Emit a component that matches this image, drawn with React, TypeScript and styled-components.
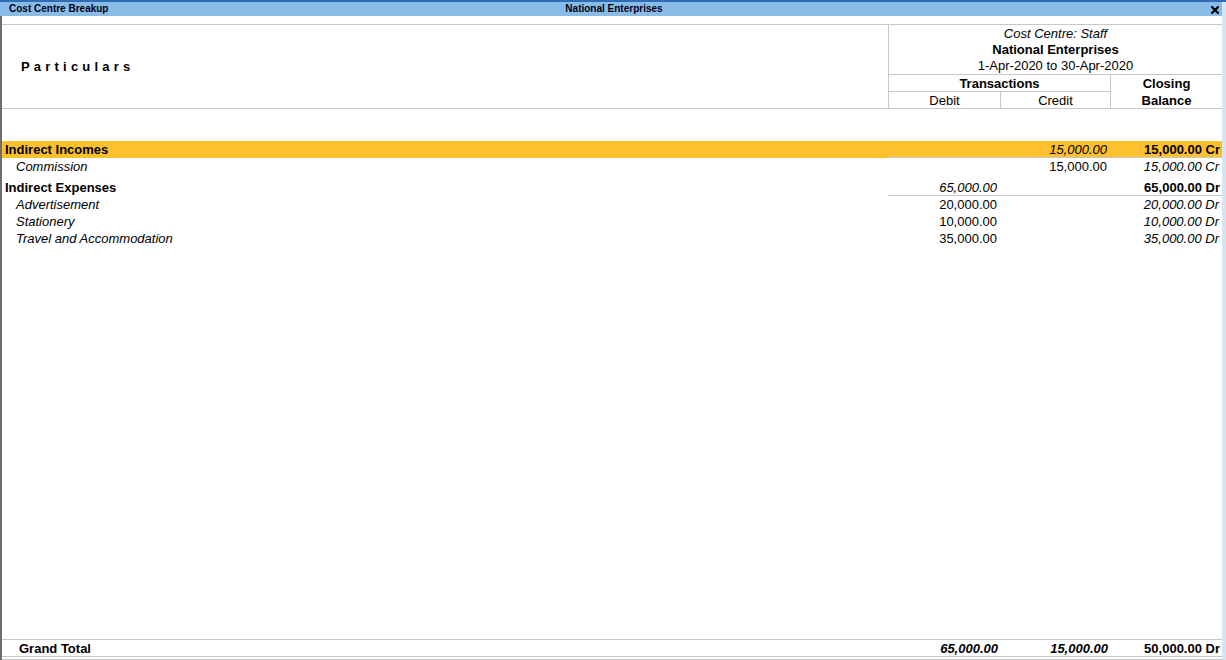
import React from 'react'
import styled, { createGlobalStyle } from 'styled-components'

const GlobalStyle = createGlobalStyle`
  html, body {
    margin: 0;
    padding: 0;
    background: #ffffff;
  }
  body {
    font-family: "Liberation Sans", Arial, sans-serif;
    color: #000000;
  }
`

const LINE = '#c8c8c8'

interface Amounts {
  debit?: string,
  credit?: string,
  closing?: string
}

interface Ledger extends Amounts {
  name: string
}

interface Group extends Ledger {
  highlight?: boolean,
  items: Ledger[]
}

const groups: Group[] = [
  {
    name: 'Indirect Incomes',
    highlight: true,
    credit: '15,000.00',
    closing: '15,000.00 Cr',
    items: [
      { name: 'Commission', credit: '15,000.00', closing: '15,000.00 Cr' }
    ]
  },
  {
    name: 'Indirect Expenses',
    debit: '65,000.00',
    closing: '65,000.00 Dr',
    items: [
      { name: 'Advertisement', debit: '20,000.00', closing: '20,000.00 Dr' },
      { name: 'Stationery', debit: '10,000.00', closing: '10,000.00 Dr' },
      { name: 'Travel and Accommodation', debit: '35,000.00', closing: '35,000.00 Dr' }
    ]
  }
]

const Window = styled.div`
  width: 1226px;
  height: 660px;
  display: flex;
  flex-direction: column;
  overflow: hidden;
`

const TopStripe = styled.div`
  height: 2px;
  background: #2f6cb5;
`

const Frame = styled.div`
  flex: 1;
  display: flex;
  min-height: 0;
`

const Main = styled.div`
  flex: 1;
  display: flex;
  flex-direction: column;
  min-width: 0;
`

const SideStrip = styled.div`
  width: 4px;
  background: #d7e5f2;
`

const TitleBar = styled.div`
  height: 14px;
  display: grid;
  grid-template-columns: 1fr auto 1fr;
  align-items: center;
  padding: 0 3px 0 9px;
  background: #88bce6;
  font-size: 10px;
  font-weight: bold;
  line-height: 14px;
  color: #000018;
`

const CloseBox = styled.div`
  justify-self: end;
  display: flex;
  align-items: center;
  padding-top: 1px;
`

const Report = styled.div`
  flex: 1;
  display: flex;
  flex-direction: column;
  border-left: 2px solid #6e6e6e;
  min-height: 0;
  font-size: 13px;
`

const Spacer = styled.div`
  height: 8px;
`

const Header = styled.div`
  display: grid;
  grid-template-columns: 1fr 334px;
  height: 83px;
  border-top: 1px solid ${LINE};
  border-bottom: 1px solid ${LINE};
`

const ParticularsHead = styled.div`
  display: flex;
  align-items: center;
  padding-left: 19px;
  font-weight: bold;
  letter-spacing: 4.2px;
`

const RightHead = styled.div`
  border-left: 1px solid ${LINE};
  display: flex;
  flex-direction: column;
`

const TitleBlock = styled.div`
  height: 48px;
  padding-top: 1px;
  border-bottom: 1px solid ${LINE};
  display: flex;
  flex-direction: column;
  align-items: center;
  line-height: 16px;
`

const HeadLine = styled.span<{ $italic?: boolean, $bold?: boolean }>`
  font-style: ${p => (p.$italic ? 'italic' : 'normal')};
  font-weight: ${p => (p.$bold ? 'bold' : 'normal')};
`

const ColumnGrid = styled.div`
  flex: 1;
  display: grid;
  grid-template-columns: 111px 110px 112px;
  grid-template-rows: 16px 17px;
`

const HeadCell = styled.div<{ $bold?: boolean, $span?: boolean, $tall?: boolean, $top?: boolean, $left?: boolean }>`
  display: flex;
  flex-direction: column;
  align-items: center;
  justify-content: center;
  line-height: 17px;
  font-weight: ${p => (p.$bold ? 'bold' : 'normal')};
  grid-column: ${p => (p.$span ? 'span 2' : 'auto')};
  grid-row: ${p => (p.$tall ? 'span 2' : 'auto')};
  border-top: ${p => (p.$top ? `1px solid ${LINE}` : 'none')};
  border-left: ${p => (p.$left ? `1px solid ${LINE}` : 'none')};
`

const Body = styled.div`
  flex: 1;
  padding-top: 32px;
`

const Row = styled.div<{ $group?: boolean, $highlight?: boolean, $gap?: boolean }>`
  display: grid;
  grid-template-columns: 1fr 112px 110px 112px;
  height: 17px;
  line-height: 17px;
  margin-top: ${p => (p.$gap ? '4px' : '0')};
  background: ${p => (p.$highlight ? '#fdc12f' : 'transparent')};
  font-weight: ${p => (p.$group ? 'bold' : 'normal')};
`

const NameCell = styled.div<{ $indent: number, $italic?: boolean }>`
  padding-left: ${p => p.$indent}px;
  font-style: ${p => (p.$italic ? 'italic' : 'normal')};
  white-space: nowrap;
`

const AmountCell = styled.div<{ $italic?: boolean, $bold?: boolean, $rule?: boolean }>`
  text-align: right;
  padding-right: ${p => (p.$bold ? '2px' : '3px')};
  white-space: nowrap;
  font-style: ${p => (p.$italic ? 'italic' : 'normal')};
  font-weight: ${p => (p.$bold ? 'bold' : 'normal')};
  box-shadow: ${p => (p.$rule ? `inset 0 -1px 0 ${LINE}` : 'none')};
`

const Footer = styled.div`
  display: grid;
  grid-template-columns: 1fr 112px 110px 112px;
  height: 16px;
  line-height: 17px;
  border-top: 1px solid ${LINE};
  border-bottom: 4px double ${LINE};
  font-weight: bold;
`

const CloseIcon: React.FC = () => (
  <svg width='8' height='8' viewBox='0 0 8 8'>
    <path d='M1 1 L7 7 M7 1 L1 7' stroke='#000' strokeWidth='2.2' strokeLinecap='square' />
  </svg>
)

const GroupBlock: React.FC<{ group: Group, first: boolean }> = ({ group, first }) => (
  <>
    <Row $group $highlight={group.highlight} $gap={!first}>
      <NameCell $indent={3}>{group.name}</NameCell>
      <AmountCell $italic $rule>{group.debit}</AmountCell>
      <AmountCell $italic $rule>{group.credit}</AmountCell>
      <AmountCell $bold $rule>{group.closing}</AmountCell>
    </Row>
    {group.items.map(item => (
      <Row key={item.name}>
        <NameCell $indent={14} $italic>{item.name}</NameCell>
        <AmountCell>{item.debit}</AmountCell>
        <AmountCell>{item.credit}</AmountCell>
        <AmountCell $italic>{item.closing}</AmountCell>
      </Row>
    ))}
  </>
)

const App: React.FC = () => (
  <>
    <GlobalStyle />
    <Window>
      <TopStripe />
      <Frame>
        <Main>
          <TitleBar>
            <span>Cost Centre Breakup</span>
            <span>National Enterprises</span>
            <CloseBox><CloseIcon /></CloseBox>
          </TitleBar>
          <Report>
            <Spacer />
            <Header>
              <ParticularsHead>Particulars</ParticularsHead>
              <RightHead>
                <TitleBlock>
                  <HeadLine $italic>Cost Centre: Staff</HeadLine>
                  <HeadLine $bold>National Enterprises</HeadLine>
                  <HeadLine>1-Apr-2020 to 30-Apr-2020</HeadLine>
                </TitleBlock>
                <ColumnGrid>
                  <HeadCell $bold $span>Transactions</HeadCell>
                  <HeadCell $bold $tall $left>
                    <span>Closing</span>
                    <span>Balance</span>
                  </HeadCell>
                  <HeadCell $top>Debit</HeadCell>
                  <HeadCell $top $left>Credit</HeadCell>
                </ColumnGrid>
              </RightHead>
            </Header>
            <Body>
              {groups.map((g, i) => <GroupBlock key={g.name} group={g} first={i === 0} />)}
            </Body>
            <Footer>
              <NameCell $indent={17}>Grand Total</NameCell>
              <AmountCell $italic $bold>65,000.00</AmountCell>
              <AmountCell $italic $bold>15,000.00</AmountCell>
              <AmountCell $bold>50,000.00 Dr</AmountCell>
            </Footer>
          </Report>
        </Main>
        <SideStrip />
      </Frame>
    </Window>
  </>
)

export default App
